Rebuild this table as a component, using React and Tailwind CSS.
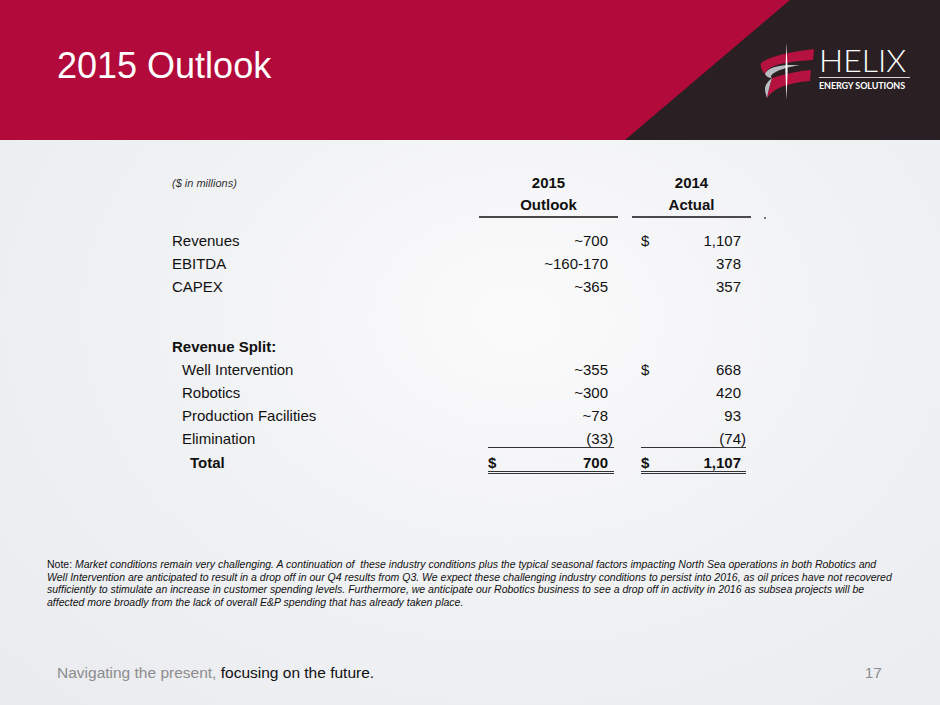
import React from 'react';

const font = { fontFamily: '"Liberation Sans", Arial, sans-serif' };

const rows = [
  { label: 'Revenues', outlook: '~700', actual: '1,107', dollar: true },
  { label: 'EBITDA', outlook: '~160-170', actual: '378' },
  { label: 'CAPEX', outlook: '~365', actual: '357' },
];

const split = [
  { label: 'Well Intervention', outlook: '~355', actual: '668', dollar: true },
  { label: 'Robotics', outlook: '~300', actual: '420' },
  { label: 'Production Facilities', outlook: '~78', actual: '93' },
];

function HelixMark() {
  return (
    <svg width="56" height="58" viewBox="0 0 56 58" className="shrink-0">
      {/* top ribbon */}
      <path d="M1 20 C 10 13, 30 9, 54 6 L 53 17 C 36 18, 20 20, 12 24 C 8 26, 6 28, 5 31 C 2 28, 0 24, 1 20 Z" fill="#b5123f" />
      {/* grey back of the ribbon */}
      <path d="M5 31 C 7 26, 14 23, 27 22 L 40 22 C 28 24, 18 27, 14 30 C 11 32, 10 34, 12 35 C 8 35, 6 33, 5 31 Z" fill="#b9bcc1" />
      {/* lower ribbon */}
      <path d="M12 35 C 24 31, 38 28, 51 27 L 50 38 C 36 39, 24 42, 17 46 C 12 49, 9 52, 7 55 C 8 49, 10 41, 12 35 Z" fill="#b5123f" />
      <path d="M12 35 C 8 38, 5 42, 5 46 C 5 49, 6 52, 7 55 C 8 49, 10 41, 12 35 Z" fill="#b9bcc1" />
      {/* spindle */}
      <path d="M26.5 0 L27.6 28 L26.5 57 L25.4 28 Z" fill="#ffffff" />
    </svg>
  );
}

function Logo() {
  return (
    <div className="flex items-start gap-[3px]">
      <HelixMark />
      <div className="flex w-[91px] flex-col pt-[2px] text-white" style={{ fontFamily: 'Lato, "Open Sans", sans-serif' }}>
        <div className="text-[32px] font-light leading-[30px] [text-align-last:justify]">HELIX</div>
        <div className="mt-[2px] h-px bg-[#d9d4d6]" />
        <div className="mt-[2px] whitespace-nowrap text-[9px] font-bold leading-[11px] tracking-[-0.1px]">
          ENERGY SOLUTIONS
        </div>
      </div>
    </div>
  );
}

function Row({ label, outlook, actual, dollar, indent }) {
  return (
    <div className="flex h-[23px] items-center text-[15px] leading-[17px] text-[#111]">
      <div className={indent ? 'w-[316px] pl-[10px]' : 'w-[316px]'}>{label}</div>
      <div className="w-[126px] pr-[6px] text-right">{outlook}</div>
      <div className="ml-[27px] flex w-[105px] justify-between pr-[5px]">
        <span>{dollar ? '$' : ''}</span>
        <span>{actual}</span>
      </div>
    </div>
  );
}

export default function App() {
  return (
    <div
      className="relative flex h-[705px] w-[940px] flex-col overflow-hidden bg-[#edeff2] bg-[radial-gradient(ellipse_at_55%_45%,#fbfbfc_0%,#f1f2f4_45%,#e9ebef_100%)]"
      style={font}
    >
      {/* header band */}
      <div className="relative flex h-[140px] shrink-0 justify-between bg-[#b20a3b]">
        <div className="absolute inset-0 bg-[#2a1f23] [clip-path:polygon(790px_0,100%_0,100%_100%,625px_100%)]" />
        <h1 className="relative pl-[57px] pt-[46px] text-[36px] font-normal leading-[40px] text-white">2015 Outlook</h1>
        <div className="relative pr-[30px] pt-[43px]">
          <Logo />
        </div>
      </div>

      {/* table */}
      <div className="mt-[32px] pl-[172px]">
        <div className="flex h-[22px] items-center text-[15px] font-bold text-[#111]">
          <div className="w-[307px] text-[11px] font-normal italic text-[#333]">($ in millions)</div>
          <div className="w-[139px] text-center">2015</div>
          <div className="ml-[14px] w-[119px] text-center">2014</div>
        </div>
        <div className="flex items-end text-[15px] font-bold text-[#111]">
          <div className="w-[307px]" />
          <div className="h-[24px] w-[139px] border-b-2 border-[#4a4a4a] text-center leading-[22px]">Outlook</div>
          <div className="ml-[14px] h-[24px] w-[119px] border-b-2 border-[#4a4a4a] text-center leading-[22px]">Actual</div>
          <div className="mb-[-1px] ml-[13px] h-[2px] w-[2px] bg-[#777]" />
        </div>

        <div className="mt-[11px]">
          {rows.map((r) => (
            <Row key={r.label} {...r} />
          ))}
        </div>

        <div className="mt-[37px]">
          <div className="flex h-[23px] items-center text-[15px] font-bold leading-[17px] text-[#111]">Revenue Split:</div>
          {split.map((r) => (
            <Row key={r.label} {...r} indent />
          ))}
          <div className="flex text-[15px] text-[#111]">
            <div className="w-[316px] pl-[10px] pt-[4px] leading-[16px]">Elimination</div>
            <div className="w-[126px] border-b border-[#333] pt-[4px] pr-[6px] text-right leading-[16px]">
              (33<span className="-mr-[5px]">)</span>
            </div>
            <div className="ml-[27px] w-[105px] border-b border-[#333] pt-[4px] pr-[5px] text-right leading-[16px]">
              (74<span className="-mr-[5px]">)</span>
            </div>
          </div>
          <div className="flex text-[15px] font-bold text-[#111]">
            <div className="w-[316px] pl-[18px] pt-[6px] leading-[17px]">Total</div>
            <div className="flex w-[126px] justify-between border-b-[3px] border-double border-[#333] pt-[6px] pr-[6px] leading-[17px]">
              <span>$</span>
              <span>700</span>
            </div>
            <div className="ml-[27px] flex w-[105px] justify-between border-b-[3px] border-double border-[#333] pt-[6px] pr-[5px] leading-[17px]">
              <span>$</span>
              <span>1,107</span>
            </div>
          </div>
        </div>
      </div>

      {/* note */}
      <p className="mt-[84px] pl-[47px] pr-[20px] text-[10.5px] leading-[12.7px] text-[#111]">
        Note: <i>Market conditions remain very challenging. A continuation of&nbsp; these industry conditions plus the typical seasonal factors impacting North Sea operations in both Robotics and</i>
        <br />
        <i>Well Intervention are anticipated to result in a drop off in our Q4 results from Q3. We expect these challenging industry conditions to persist into 2016, as oil prices have not recovered</i>
        <br />
        <i>sufficiently to stimulate an increase in customer spending levels. Furthermore, we anticipate our Robotics business to see a drop off in activity in 2016 as subsea projects will be</i>
        <br />
        <i>affected more broadly from the lack of overall E&amp;P spending that has already taken place.</i>
      </p>

      {/* footer */}
      <div className="mt-auto flex items-center justify-between pb-[23px] pl-[57px] pr-[58px] text-[15.5px] leading-[18px]">
        <span className="text-[#8c8c8c]">
          Navigating the present, <span className="text-[#111]">focusing on the future.</span>
        </span>
        <span className="text-[#8c8c8c]">17</span>
      </div>
    </div>
  );
}
